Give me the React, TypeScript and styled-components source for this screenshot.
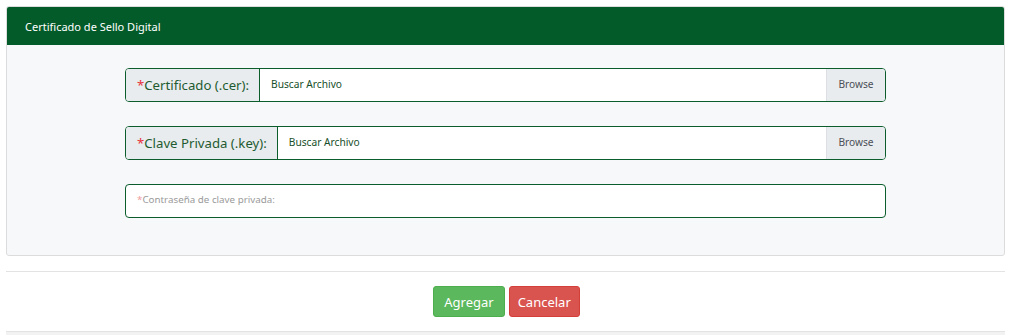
import styled, { createGlobalStyle } from 'styled-components'

const GlobalStyle = createGlobalStyle`
  html, body {
    margin: 0;
    padding: 0;
    background: #ffffff;
    font-family: "Noto Sans", "Open Sans", "Liberation Sans", sans-serif;
  }
`

const Page = styled.div`
  padding: 6px 8px 0 6px;
`

const Card = styled.section`
  border: 1px solid #dcdcdc;
  border-radius: 3px;
  background: #f7f8fa;
  overflow: hidden;
`

const CardHeader = styled.header`
  height: 38px;
  display: flex;
  align-items: center;
  padding: 0 18px;
  background: #035b29;
  color: #ffffff;
  font-size: 11px;
`

const CardBody = styled.div`
  display: flex;
  flex-direction: column;
  align-items: center;
  gap: 24px;
  padding: 23px 0 37px;
`

const InputGroup = styled.div`
  width: 761px;
  height: 34px;
  box-sizing: border-box;
  display: flex;
  border: 1px solid #0b5d2c;
  border-radius: 4px;
  background: #ffffff;
  overflow: hidden;
`

const Addon = styled.label`
  display: flex;
  align-items: center;
  padding: 0 10px 0 11px;
  background: #e9ecef;
  border-right: 1px solid #0b5d2c;
  color: #1f5b31;
  font-size: 13.2px;
  white-space: nowrap;
`

const Required = styled.span`
  color: #e8323c;
`

const FileName = styled.div`
  flex: 1;
  display: flex;
  align-items: center;
  padding: 0 11px;
  color: #174f2a;
  font-size: 10.2px;
  padding-bottom: 3px;
`

const Browse = styled.span`
  display: flex;
  align-items: center;
  justify-content: center;
  width: 58px;
  background: #e9ecef;
  border-left: 1px solid #dcdfe3;
  color: #4b5057;
  font-size: 10.2px;
  padding-bottom: 3px;
`

const Placeholder = styled.div`
  display: flex;
  align-items: center;
  padding: 0 11px 3px;
  color: #9a9a9a;
  font-size: 9.8px;
`

const Divider = styled.hr`
  margin: 15px 0 14px;
  border: 0;
  border-top: 1px solid #e3e3e3;
`

const Actions = styled.div`
  display: flex;
  justify-content: center;
  gap: 4px;
  padding-left: 2px;
`

const Button = styled.button<{ $tone: 'ok' | 'cancel' }>`
  height: 31px;
  padding: 0 ${p => (p.$tone === 'ok' ? '10px' : '8px')};
  border-radius: 3px;
  border: 1px solid ${p => (p.$tone === 'ok' ? '#4cae4c' : '#d43f3a')};
  background: ${p => (p.$tone === 'ok' ? '#5cb85c' : '#d9534f')};
  color: #ffffff;
  font-family: inherit;
  font-size: 13px;
`

const Footer = styled.div`
  margin-top: 14px;
  height: 10px;
  border-top: 1px solid #e3e3e3;
  background: #f2f2f2;
`

export default function App() {
  return (
    <Page>
      <GlobalStyle />
      <Card>
        <CardHeader>Certificado de Sello Digital</CardHeader>
        <CardBody>
          <InputGroup>
            <Addon><Required>*</Required>Certificado (.cer):</Addon>
            <FileName>Buscar Archivo</FileName>
            <Browse>Browse</Browse>
          </InputGroup>
          <InputGroup>
            <Addon><Required>*</Required>Clave Privada (.key):</Addon>
            <FileName>Buscar Archivo</FileName>
            <Browse>Browse</Browse>
          </InputGroup>
          <InputGroup>
            <Placeholder>
              <Required style={{ color: '#f09aa0' }}>*</Required>Contraseña de clave privada:
            </Placeholder>
          </InputGroup>
        </CardBody>
      </Card>
      <Divider />
      <Actions>
        <Button $tone="ok">Agregar</Button>
        <Button $tone="cancel">Cancelar</Button>
      </Actions>
      <Footer />
    </Page>
  )
}
